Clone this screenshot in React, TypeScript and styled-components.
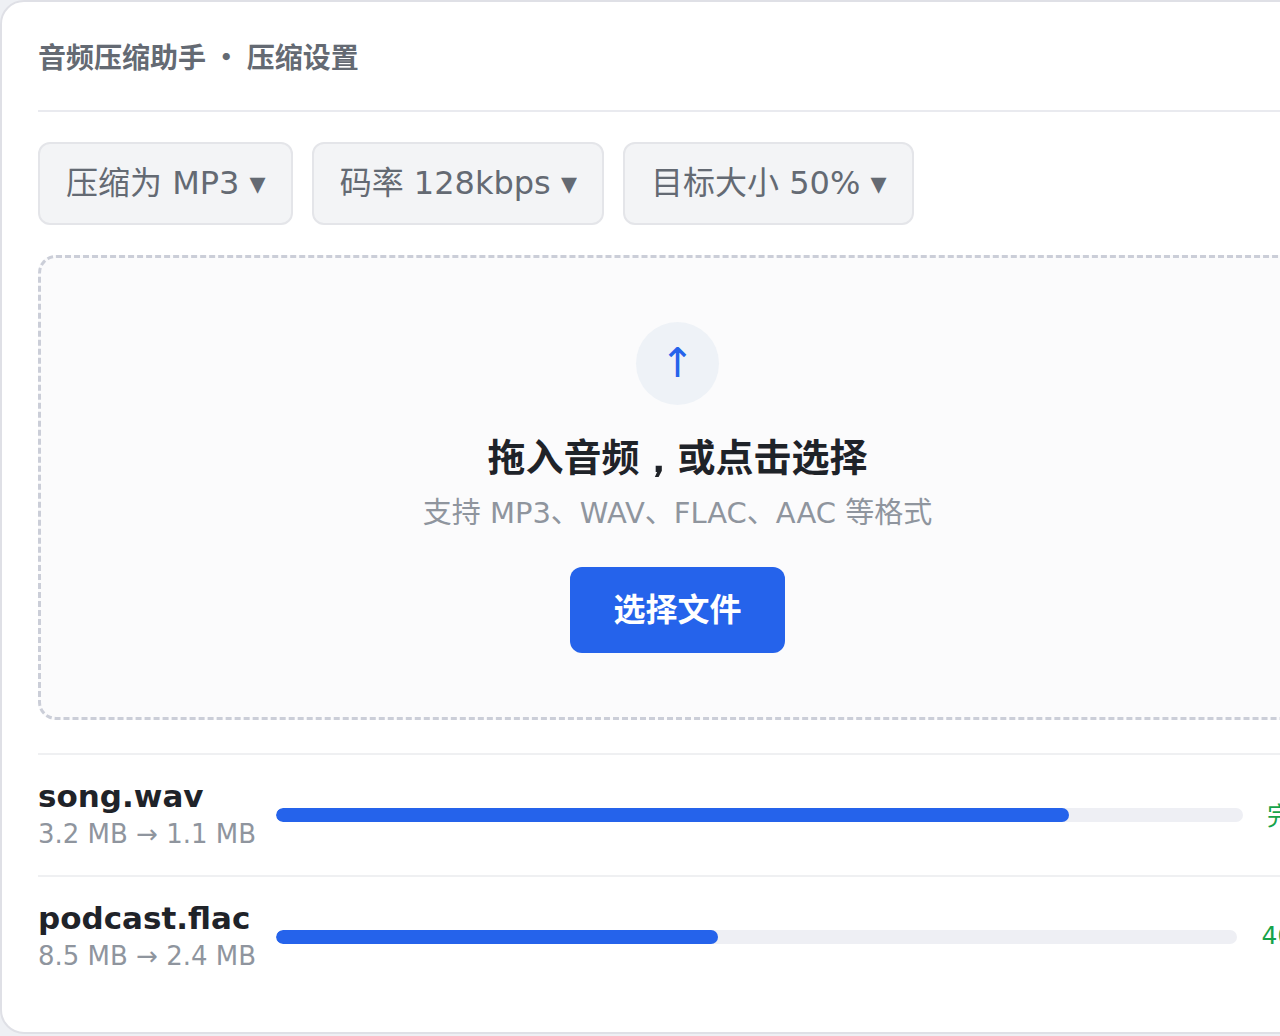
import React from "react";
import styled, { createGlobalStyle } from "styled-components";

const GlobalStyle = createGlobalStyle`
  *, *::before, *::after { box-sizing: border-box; }
  body {
    margin: 0;
    background: #eef0f4;
    color: #1f2329;
    font-family: "DejaVu Sans", "Noto Sans CJK SC", sans-serif;
  }
`;

const Page = styled.div`
  overflow: hidden;
  padding-bottom: 2px;
`;

const Card = styled.main`
  margin-right: -75px;
  padding: 36px 36px 35px;
  background: #ffffff;
  border: 2px solid #dfe0e6;
  border-radius: 24px;
`;

const Header = styled.header`
  padding-bottom: 36px;
  border-bottom: 2px solid #e9eaef;
`;

const Title = styled.h1`
  margin: 0;
  font-family: "Noto Sans CJK SC", sans-serif;
  font-size: 28px;
  line-height: 36px;
  font-weight: 600;
  color: #646a73;
`;

const Options = styled.div`
  display: flex;
  gap: 19px;
  margin: 30px 0;
`;

const Chip = styled.select`
  appearance: none;
  field-sizing: content;
  height: 83px;
  margin: 0;
  padding: 0 25px 2px 26px;
  border: 2px solid #e4e5e9;
  border-radius: 12px;
  background: #f3f4f6;
  color: #646a73;
  font-family: inherit;
  font-size: 32px;
`;

const DropZone = styled.section`
  display: flex;
  flex-direction: column;
  align-items: center;
  padding: 64px;
  border: 3px dashed #cbced8;
  border-radius: 18px;
  background: #fbfbfc;
`;

const UploadBadge = styled.div`
  display: grid;
  place-items: center;
  width: 83px;
  height: 83px;
  padding-bottom: 2px;
  border-radius: 50%;
  background: #eef2f7;
  color: #2563eb;
  font-size: 41px;
`;

const DropTitle = styled.h2`
  margin: 25px 0 5px;
  font-size: 38px;
  line-height: 56px;
  font-weight: 600;
`;

const Comma = styled.span`
  font-family: "WenQuanYi Zen Hei", "Noto Sans CJK SC", sans-serif;
  -webkit-text-stroke: 2px currentColor;
`;

const DropHint = styled.p`
  margin: 0 0 32px;
  font-size: 29px;
  line-height: 44px;
  color: #8f959e;
`;

const PickButton = styled.button`
  height: 86px;
  padding: 0 43px 6px;
  border: 0;
  border-radius: 12px;
  background: #2563eb;
  color: #ffffff;
  font-family: inherit;
  font-size: 32px;
  font-weight: 600;
`;

const FileList = styled.ul`
  margin: 33px 0 0;
  padding: 0;
  list-style: none;
`;

const FileRow = styled.li`
  display: flex;
  align-items: center;
  gap: 20px;
  height: 122px;
  border-top: 2px solid #eff0f2;
`;

const FileName = styled.div`
  font-size: 31px;
  line-height: 38px;
  font-weight: 600;
`;

const FileSize = styled.div`
  font-size: 26px;
  line-height: 38px;
  color: #8f959e;
`;

const Track = styled.div`
  flex: 1;
  height: 14px;
  border-radius: 7px;
  background: #eeeff4;
  overflow: hidden;
`;

const Fill = styled.div`
  height: 100%;
  border-radius: 7px;
  background: #2563eb;
`;

const Status = styled.span`
  padding: 0 0 3px 4px;
  font-size: 25px;
  color: #16a34a;
`;

const chips = [
  { label: "输出格式", values: ["压缩为 MP3 ▾", "压缩为 AAC ▾"] },
  { label: "码率", values: ["码率 128kbps ▾", "码率 192kbps ▾"] },
  { label: "目标大小", values: ["目标大小 50% ▾", "目标大小 70% ▾"] },
];

const files = [
  { name: "song.wav", size: "3.2 MB → 1.1 MB", progress: 82, status: "完成" },
  { name: "podcast.flac", size: "8.5 MB → 2.4 MB", progress: 46, status: "46%" },
];

export default function App() {
  return (
    <Page lang="zh-CN">
      <GlobalStyle />
      <Card>
        <Header>
          <Title>音频压缩助手 · 压缩设置</Title>
        </Header>
        <Options>
          {chips.map((chip) => (
            <Chip key={chip.label} aria-label={chip.label}>
              {chip.values.map((value) => (
                <option key={value}>{value}</option>
              ))}
            </Chip>
          ))}
        </Options>
        <DropZone>
          <UploadBadge aria-hidden="true">↑</UploadBadge>
          <DropTitle>
            拖入音频<Comma>，</Comma>或点击选择
          </DropTitle>
          <DropHint>支持 MP3、WAV、FLAC、AAC 等格式</DropHint>
          <PickButton type="button">选择文件</PickButton>
        </DropZone>
        <FileList>
          {files.map((file) => (
            <FileRow key={file.name}>
              <div>
                <FileName>{file.name}</FileName>
                <FileSize>{file.size}</FileSize>
              </div>
              <Track
                role="progressbar"
                aria-label={file.name}
                aria-valuenow={file.progress}
                aria-valuemin={0}
                aria-valuemax={100}
              >
                <Fill style={{ width: `${file.progress}%` }} />
              </Track>
              <Status>{file.status}</Status>
            </FileRow>
          ))}
        </FileList>
      </Card>
    </Page>
  );
}
